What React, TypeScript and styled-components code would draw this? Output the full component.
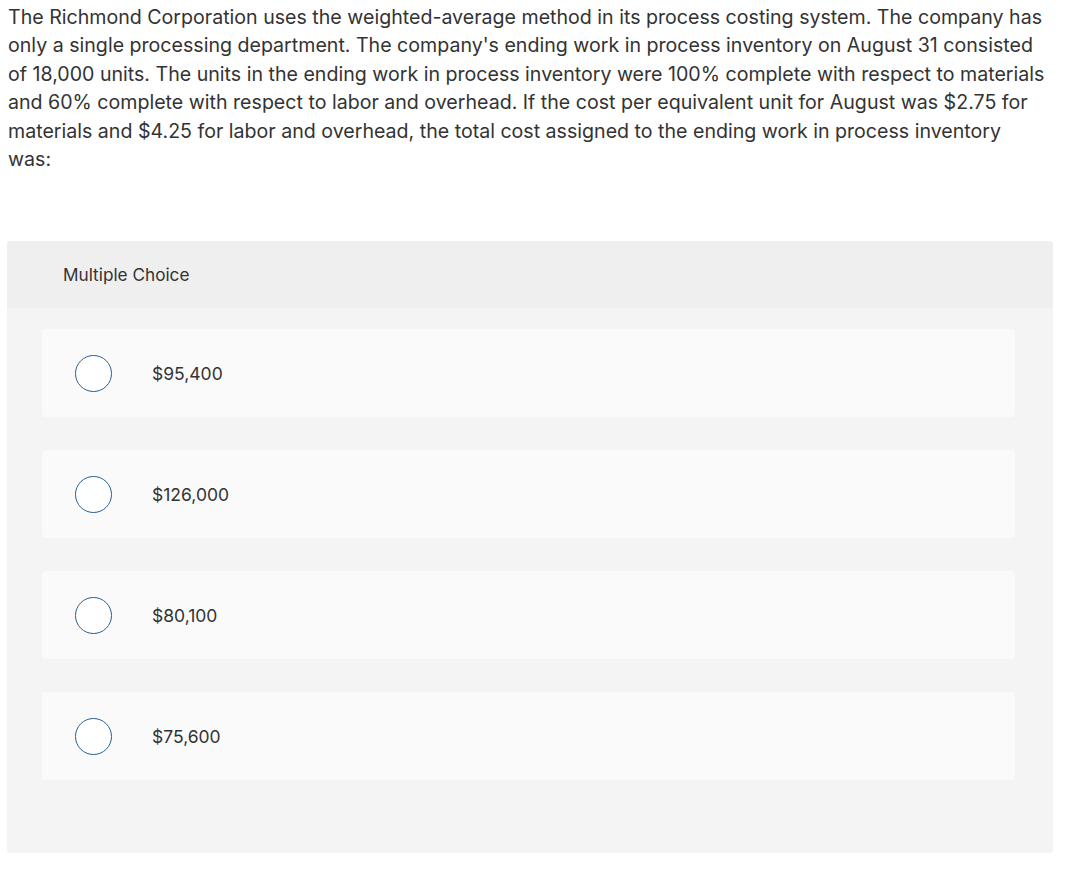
import React from "react";
import styled, { createGlobalStyle } from "styled-components";

const GlobalStyle = createGlobalStyle`
  html, body { margin: 0; padding: 0; background: #ffffff; }
  body { font-family: Inter, "Noto Sans", sans-serif; color: #333333; }
`;

const Page = styled.main`
  padding: 3px 23px 0 7px;
`;

const Question = styled.div`
  padding-left: 1px;
  font-size: 19.6px;
  line-height: 28.4px;
  color: #333333;
`;

const Line = styled.span`
  display: block;
  white-space: nowrap;
`;

const Panel = styled.section`
  margin-top: 67.6px;
  width: 1046px;
  background: #f4f4f4;
  border-radius: 4px;
  overflow: hidden;
  padding-bottom: 73px;
`;

const Header = styled.header`
  height: 67px;
  background: #efefef;
  display: flex;
  align-items: center;
  padding-left: 56px;
  font-size: 17.2px;
  color: #333333;
`;

const Options = styled.ul`
  list-style: none;
  margin: 21px 38px 0 35px;
  padding: 0;
  display: flex;
  flex-direction: column;
  gap: 33px;
`;

const Option = styled.li`
  height: 88px;
  background: #fafafa;
  border-radius: 4px;
  display: flex;
  align-items: center;
  padding-left: 33px;
`;

const Radio = styled.span`
  width: 35px;
  height: 35px;
  border-radius: 50%;
  border: 1px solid #2a5f96;
  background: #ffffff;
  flex: none;
`;

const Label = styled.span`
  margin-left: 40px;
  font-size: 17.5px;
  color: #333333;
`;

const lines = [
  "The Richmond Corporation uses the weighted-average method in its process costing system. The company has",
  "only a single processing department. The company's ending work in process inventory on August 31 consisted",
  "of 18,000 units. The units in the ending work in process inventory were 100% complete with respect to materials",
  "and 60% complete with respect to labor and overhead. If the cost per equivalent unit for August was $2.75 for",
  "materials and $4.25 for labor and overhead, the total cost assigned to the ending work in process inventory",
  "was:",
];

const choices = ["$95,400", "$126,000", "$80,100", "$75,600"];

export default function App() {
  return (
    <>
      <GlobalStyle />
      <Page>
        <Question>
          {lines.map((l) => (
            <Line key={l}>{l}</Line>
          ))}
        </Question>
        <Panel>
          <Header>Multiple Choice</Header>
          <Options>
            {choices.map((c) => (
              <Option key={c}>
                <Radio />
                <Label>{c}</Label>
              </Option>
            ))}
          </Options>
        </Panel>
      </Page>
    </>
  );
}
